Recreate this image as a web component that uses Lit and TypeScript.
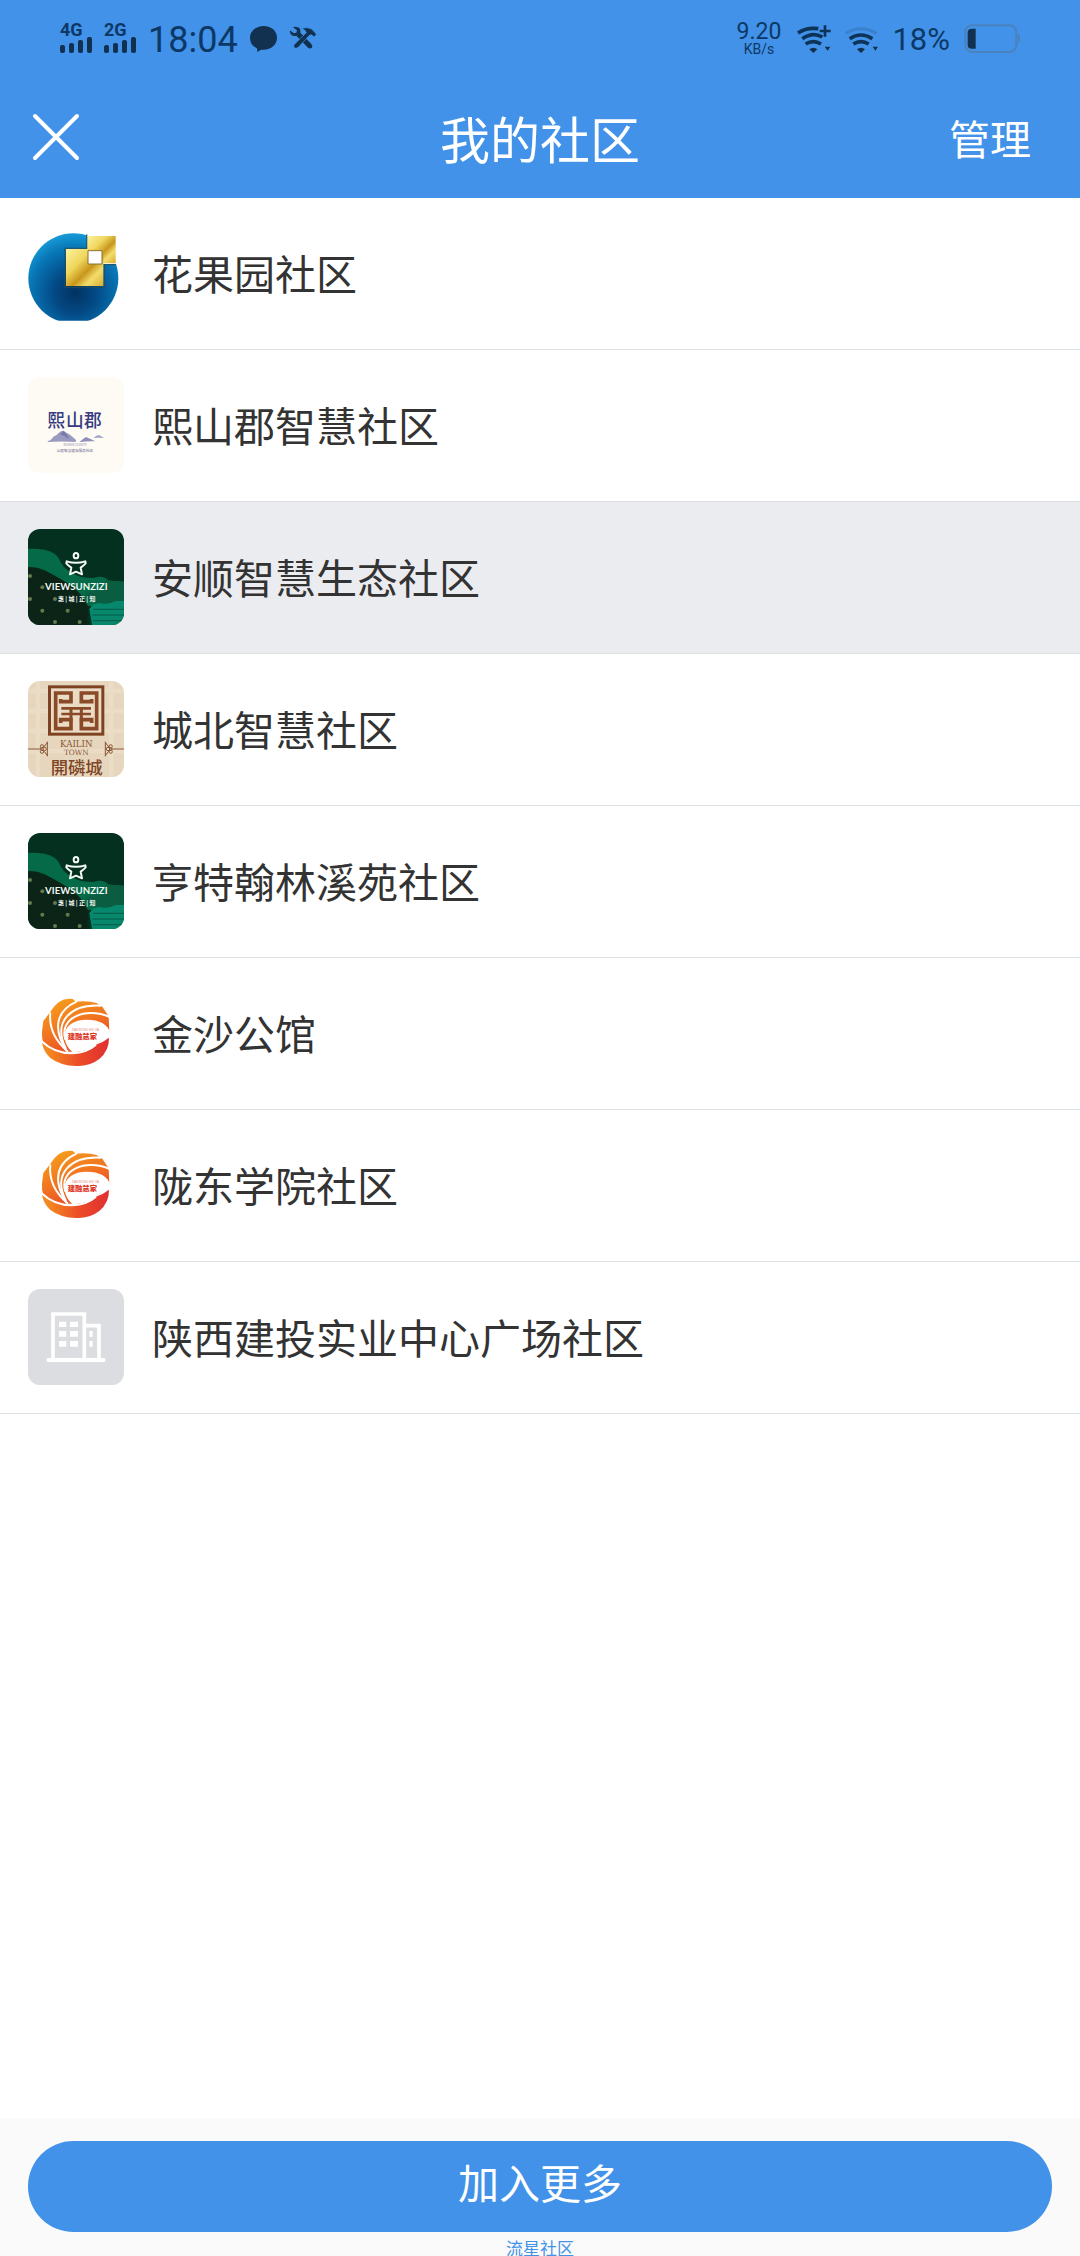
import { LitElement, html, css, svg, type TemplateResult, type SVGTemplateResult } from "lit";
import { customElement, property } from "lit/decorators.js";

type LogoName = "globe" | "xishan" | "view" | "kailin" | "swirl" | "building";

interface Community {
  name: string;
  logo: LogoName;
  active?: boolean;
}

const COMMUNITIES: Community[] = [
  { name: "花果园社区", logo: "globe" },
  { name: "熙山郡智慧社区", logo: "xishan" },
  { name: "安顺智慧生态社区", logo: "view", active: true },
  { name: "城北智慧社区", logo: "kailin" },
  { name: "亨特翰林溪苑社区", logo: "view" },
  { name: "金沙公馆", logo: "swirl" },
  { name: "陇东学院社区", logo: "swirl" },
  { name: "陕西建投实业中心广场社区", logo: "building" },
];

const globe = svg`
  <defs>
    <radialGradient id="ball" cx="0.52" cy="0.66" r="0.68">
      <stop offset="0" stop-color="#023361" />
      <stop offset="0.35" stop-color="#034a86" />
      <stop offset="0.75" stop-color="#0878b8" />
      <stop offset="1" stop-color="#1aa0dc" />
    </radialGradient>
    <linearGradient id="gold" x1="0" y1="0" x2="1" y2="1">
      <stop offset="0" stop-color="#fbf3a0" />
      <stop offset="0.35" stop-color="#f0d65c" />
      <stop offset="0.58" stop-color="#c8961c" />
      <stop offset="0.75" stop-color="#f3dc6c" />
      <stop offset="1" stop-color="#d9ad30" />
    </linearGradient>
    <clipPath id="cut"><rect x="0" y="0" width="288" height="287" /></clipPath>
  </defs>
  <circle cx="136" cy="160" r="135" fill="url(#ball)" clip-path="url(#cut)" />
  <path d="M178 20H288V117H178z" fill="#fff" />
  <path d="M178 33H263V115H178z" fill="url(#gold)" />
  <path d="M176 28V70H111V187H229V119H264" fill="none" stroke="#2a4a50" stroke-width="4" opacity="0.7" />
  <path d="M114 72H226V183H114z" fill="url(#gold)" />
  <path d="M180 77H222V117H180z" fill="#fff" stroke="#8a7430" stroke-width="3" />
`;

const xishan = svg`
  <rect width="288" height="288" fill="#fefaf4" />
  <g fill="#363b80" font-family="'Noto Sans CJK SC', sans-serif" font-weight="500" font-size="53">
    <text x="58" y="149">熙</text>
    <text x="114" y="149">山</text>
    <text x="168" y="149">郡</text>
  </g>
  <path d="M59 193Q70 190 78 178Q86 176 92 168Q100 160 107 161Q116 168 124 172Q134 180 145 190L142 195Q100 192 59 195z" fill="#9a9bc0" />
  <path d="M96 172l10-10l10 10l8 14q-16-10-28-14z" fill="#7779a8" />
  <path d="M155 194Q168 184 174 180Q184 184 202 193Q178 192 155 195z" fill="#8e90b9" />
  <path d="M196 183Q206 174 214 174L228 183Q212 181 196 183z" fill="#a4a6c8" />
  <g fill="#8b8cae" font-family="'Noto Sans CJK SC', sans-serif" text-anchor="middle">
    <text x="141" y="207" font-size="9">XISHAN COUNTY</text>
    <text x="141" y="224" font-size="11" fill="#6a6b92">山居智慧健康服务社区</text>
  </g>
`;

const view = svg`
  <rect width="288" height="288" fill="#03301f" />
  <path d="M0 59Q55 58 76 72Q92 82 98 100Q110 122 134 132Q160 150 200 146Q228 138 240 154Q262 158 288 158V218L190 232Q170 230 160 206Q120 160 50 124Q24 112 0 114z" fill="#046a47" />
  <path d="M232 154Q262 158 288 158V222H204Q170 214 172 196Q196 180 222 186Q236 176 232 154z" fill="#0b5d42" />
  <path d="M0 114Q40 116 80 140Q150 176 172 216Q186 238 176 288H0z" fill="#0b2417" />
  <path d="M184 240Q196 222 214 222Q240 230 262 216H288V288H192Z" fill="#07876b" />
  <path d="M196 241H288M194 258H288M194 275H288" stroke="#055a47" stroke-width="3" />
  <g fill="#66794d">
    <circle cx="6" cy="141" r="6" /><circle cx="43" cy="175" r="6" /><circle cx="6" cy="210" r="6" />
    <circle cx="43" cy="245" r="6" /><circle cx="119" cy="245" r="6" /><circle cx="81" cy="279" r="6" />
    <circle cx="155" cy="279" r="6" /><circle cx="81" cy="210" r="6" />
  </g>
  <g fill="none" stroke="#f4fbf7" stroke-width="6" stroke-linejoin="round">
    <ellipse cx="144" cy="80" rx="7" ry="8" />
    <path d="M116 97Q144 106 172 97L173 103Q164 112 158 116L162 136L144 128L126 136L130 116Q120 109 115 103z" />
  </g>
  <g fill="#f1f7f3" text-anchor="middle">
    <text x="145" y="182" font-family="Lato, sans-serif" font-weight="700" font-size="29">VIEWSUNZIZI</text>
    <text x="146" y="216" font-family="'Noto Sans CJK SC', sans-serif" font-weight="700" font-size="18">惠 | 城 | 正 | 知</text>
  </g>
`;

const kailin = svg`
  <rect width="288" height="288" fill="#e6d6bd" />
  <path d="M0 30H288M0 90H288M0 150H288M0 210H288M30 0V288M250 0V288" stroke="#eddfca" stroke-width="14" opacity="0.6" />
  <rect x="60" y="13" width="169" height="151" fill="#7e4223" />
  <rect x="69" y="22" width="151" height="133" fill="#eadbc4" />
  <g fill="none" stroke="#8a4a28" stroke-width="11">
    <path d="M98 54V62H129V36H83V143H129V116H98V126" />
    <path d="M191 54V62H160V36H206V143H160V116H191V126" />
    <path d="M100 82H189M100 99H189" stroke-width="8" />
    <path d="M129 82V120M160 82V120" stroke-width="9" />
  </g>
  <g fill="#8a5636" text-anchor="middle" font-family="'DejaVu Serif', serif">
    <text x="145" y="197" font-size="26">KAILIN</text>
    <text x="145" y="222" font-size="22">TOWN</text>
    <text x="146" y="278" font-family="'Noto Sans CJK TC', sans-serif" font-weight="500" font-size="52" fill="#7e4526">開磷城</text>
  </g>
  <g fill="none" stroke="#8a5636" stroke-width="3">
    <path d="M0 204H36M288 204H254M58 182V226M232 182V226" />
    <path d="M58 184Q52 198 36 204Q52 210 58 224M232 184Q238 198 254 204Q238 210 232 224" />
    <circle cx="42" cy="196" r="5" /><circle cx="42" cy="212" r="5" />
    <circle cx="248" cy="196" r="5" /><circle cx="248" cy="212" r="5" />
    <circle cx="50" cy="204" r="5" /><circle cx="240" cy="204" r="5" />
  </g>
`;

const swirl = svg`
  <defs>
    <linearGradient id="flame" gradientUnits="userSpaceOnUse" x1="90" y1="50" x2="170" y2="240">
      <stop offset="0" stop-color="#f59a1c" />
      <stop offset="0.45" stop-color="#f07022" />
      <stop offset="1" stop-color="#e4322a" />
    </linearGradient>
    <linearGradient id="crescent" gradientUnits="userSpaceOnUse" x1="60" y1="200" x2="244" y2="190">
      <stop offset="0" stop-color="#f3891f" />
      <stop offset="0.5" stop-color="#ec4b28" />
      <stop offset="1" stop-color="#e02f31" />
    </linearGradient>
  </defs>
  <path d="M46 108L66 82Q92 36 134 42L144 50Q176 46 206 54L216 62L222 64L242 94L244 142L180 200H60Q40 176 42 140z" fill="url(#flame)" />
  <path d="M110 152C110 122 138 104 176 104C214 104 240 118 246 142Q244 152 232 158Q220 162 206 178Q182 200 134 202Q110 182 110 152z" fill="#fff" />
  <path d="M243 158Q244 196 214 222Q184 245 144 243Q98 242 66 218Q46 200 42 172Q84 206 134 206Q176 204 202 180Q226 172 243 158z" fill="url(#crescent)" />
  <g fill="none" stroke="#fff" stroke-width="6">
    <path d="M67 82Q60 150 120 200" />
    <path d="M146 50C86 76 72 130 116 198" />
    <path d="M220 62C130 56 72 108 114 192" />
    <path d="M246 96C170 64 92 100 112 164" />
    <path d="M40 168Q80 206 134 205Q176 203 204 179" />
  </g>
  <g text-anchor="middle">
    <text x="172" y="137" font-family="'Liberation Sans', sans-serif" font-size="9" fill="#e98a80">JIAN RONG HUI JIA</text>
    <text x="163" y="163" font-family="'Noto Sans CJK SC', sans-serif" font-weight="900" font-size="22" fill="#e03a2c">建融慧家</text>
  </g>
`;

const building = svg`
  <rect width="288" height="288" fill="#dcdde1" />
  <path d="M61 213H227" stroke="#fff" stroke-width="12" stroke-linecap="round" />
  <path d="M75 214V75H169V214M173 110H213V214" fill="none" stroke="#fff" stroke-width="11" />
  <path d="M93 98h22v16h-22zM126 98h24v16h-24zM93 126h22v17h-22zM126 126h24v17h-24zM93 156h22v17h-22zM126 156h24v17h-24zM184 126h10v17h-10zM184 156h10v17h-10z" fill="#fff" />
`;

const LOGOS: Record<LogoName, SVGTemplateResult> = { globe, xishan, view, kailin, swirl, building };

@customElement("community-logo")
export class CommunityLogo extends LitElement {
  static styles = css`
    :host {
      display: block;
      flex: none;
      width: 96px;
      height: 96px;
      border-radius: 12px;
      overflow: hidden;
    }
    .art {
      display: block;
      width: 100%;
      height: 100%;
    }
  `;

  @property() name: LogoName = "building";

  render(): TemplateResult {
    return html`<svg class="art" viewBox="0 0 288 288" aria-hidden="true">${LOGOS[this.name]}</svg>`;
  }
}

@customElement("status-bar")
export class StatusBar extends LitElement {
  static styles = css`
    :host {
      display: flex;
      justify-content: space-between;
      align-items: center;
      box-sizing: border-box;
      height: 80px;
      padding: 0 60px 4px;
      color: #0d3866;
      font-family: Roboto, "Noto Sans CJK SC", sans-serif;
    }
    .group {
      display: flex;
      align-items: center;
    }
    .left {
      gap: 12px;
    }
    .right {
      gap: 14px;
    }
    .signal {
      display: grid;
      justify-items: start;
    }
    .network {
      font-size: 18px;
      font-weight: 700;
      line-height: 14px;
    }
    .time {
      padding-top: 4px;
      font-size: 36px;
      line-height: 40px;
    }
    .speed {
      display: grid;
      justify-items: center;
      margin-right: 2px;
      padding-top: 2px;
      font-size: 23px;
      line-height: 20px;
    }
    .unit {
      font-size: 14px;
      line-height: 14px;
    }
    .charge {
      padding-top: 4px;
      font-size: 31px;
      line-height: 40px;
    }
    svg {
      display: block;
      fill: #12304f;
    }
    .faint {
      stroke: #3a80cc;
    }
  `;

  private signal(label: string): TemplateResult {
    return html`<div class="signal">
      <span class="network">${label}</span>
      <svg width="32" height="16" viewBox="0 0 32 16" aria-hidden="true">
        <rect x="0" y="8" width="5" height="8" rx="2" />
        <rect x="9" y="6" width="5" height="10" rx="2" />
        <rect x="18" y="3" width="5" height="13" rx="2" />
        <rect x="27" y="0" width="5" height="16" rx="2" />
      </svg>
    </div>`;
  }

  render(): TemplateResult {
    return html`
      <div class="group left">
        ${this.signal("4G")} ${this.signal("2G")}
        <span class="time">18:04</span>
        <svg width="27" height="27" viewBox="0 0 81 81" aria-hidden="true">
          <path d="M41 3C64 3 81 18 81 38S64 74 41 74Q36 74 34 74L21 81Q23 74 20 69Q0 60 0 38C0 18 18 3 41 3z" />
        </svg>
        <svg width="28" height="24" viewBox="0 0 84 72" aria-hidden="true">
          <path d="M12 4L24 13L22 20L14 22L3 13Q1 25 13 30Q19 31 22 29L54 62Q60 70 68 66Q73 60 67 54L34 20Q36 6 26 4Q18 1 12 4z" />
          <path d="M38 7Q54 2 68 9L77 19L82 25L75 33L68 26L61 28L28 64Q20 70 15 64Q12 58 18 53L52 20Q50 12 38 7z" stroke="#4192e8" stroke-width="2" />
        </svg>
      </div>
      <div class="group right">
        <div class="speed"><span>9.20</span><span class="unit">KB/s</span></div>
        <svg width="34" height="29" viewBox="296 70 102 87" aria-hidden="true">
          <g fill="none" stroke="#0d3358" stroke-width="11">
            <path d="M299 97Q325 79 360 84" />
            <path d="M312 114Q343 92 372 109" />
            <path d="M322 130Q345 116 368 130" />
            <path d="M364 91H397M380 74V108" stroke-width="8" />
          </g>
          <path d="M333 146Q345 137 357 146L345 157zM379 138H396L388 150z" />
        </svg>
        <svg width="33" height="29" viewBox="438 70 99 87" aria-hidden="true">
          <path class="faint" d="M440 98Q486 70 533 98" fill="none" stroke-width="9" />
          <g fill="none" stroke="#0d3358" stroke-width="11">
            <path d="M452 114Q486 92 520 114" />
            <path d="M463 130Q486 116 509 130" />
          </g>
          <path d="M474 146Q486 137 498 146L486 157zM521 138H537L529 150z" />
        </svg>
        <span class="charge">18%</span>
        <svg width="56" height="29" viewBox="790 70 168 87" aria-hidden="true">
          <rect x="794" y="74" width="153" height="80" rx="20" fill="none" stroke="#4a82be" stroke-width="6" />
          <path d="M951 99Q958 101 958 114Q958 126 951 128z" fill="#4a82be" />
          <path d="M825 84V144H813Q801 144 801 132V96Q801 84 813 84z" />
        </svg>
      </div>
    `;
  }
}

@customElement("app-root")
export class AppRoot extends LitElement {
  static styles = css`
    :host {
      display: flex;
      flex-direction: column;
      min-height: 100vh;
      background: #fff;
      color: #333;
      font-family: "Noto Sans CJK SC", sans-serif;
      font-size: 41px;
      line-height: 60px;
    }
    button {
      margin: 0;
      border: 0;
      padding: 0;
      background: none;
      color: inherit;
      font: inherit;
      cursor: pointer;
    }
    .top {
      background: #4192e8;
      color: #fff;
    }
    .nav {
      display: grid;
      grid-template-columns: 1fr auto 1fr;
      align-items: center;
      box-sizing: border-box;
      height: 118px;
      padding: 0 32px 5px;
    }
    .nav-title {
      margin: 0;
      font-size: 50px;
      font-weight: 400;
      line-height: 72px;
    }
    .close {
      justify-self: start;
    }
    .close-icon {
      display: block;
      fill: none;
      stroke: #fff;
      stroke-width: 4;
      stroke-linecap: round;
    }
    .manage {
      justify-self: end;
      padding: 0 17px;
    }
    .list {
      margin: 0;
      padding: 0;
      list-style: none;
    }
    .item {
      border-bottom: 1px solid #dedfe1;
    }
    .row {
      display: flex;
      align-items: center;
      gap: 28px;
      box-sizing: border-box;
      width: 100%;
      padding: 27px 28px 28px;
      text-align: left;
    }
    .row.active {
      background: #ebecf0;
    }
    .name {
      padding-bottom: 3px;
    }
    .footer {
      display: grid;
      gap: 8px;
      margin-top: auto;
      padding: 23px 28px 0;
      background: #fafafa;
    }
    .join {
      height: 91px;
      padding-bottom: 12px;
      border-radius: 46px;
      background: #4192e8;
      color: #fff;
    }
    .brand {
      justify-self: center;
      color: #4192e8;
      font-size: 17px;
      line-height: 16px;
      text-decoration: none;
    }
  `;

  render(): TemplateResult {
    return html`
      <header class="top">
        <status-bar></status-bar>
        <div class="nav">
          <button class="close" type="button" aria-label="关闭">
            <svg class="close-icon" width="48" height="48" viewBox="0 0 48 48"><path d="M3 3L45 45M45 3L3 45" /></svg>
          </button>
          <h1 class="nav-title">我的社区</h1>
          <button class="manage" type="button">管理</button>
        </div>
      </header>
      <ul class="list">
        ${COMMUNITIES.map(
          (c) => html`<li class="item">
            <button class="row ${c.active ? "active" : ""}" type="button">
              <community-logo .name=${c.logo}></community-logo>
              <span class="name">${c.name}</span>
            </button>
          </li>`,
        )}
      </ul>
      <footer class="footer">
        <button class="join" type="button">加入更多</button>
        <a class="brand" href="#">流星社区</a>
      </footer>
    `;
  }
}
